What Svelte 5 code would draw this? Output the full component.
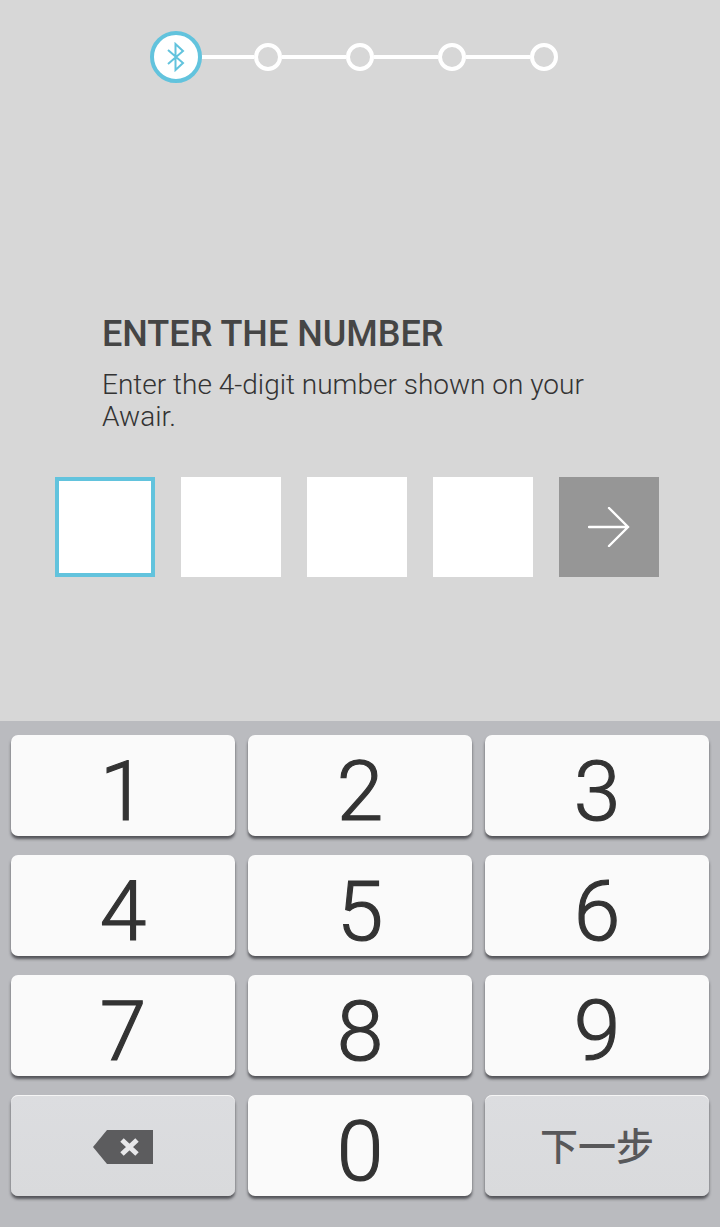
<script>
	const keys = ['1', '2', '3', '4', '5', '6', '7', '8', '9'];
	const dots = [0, 1, 2, 3];
</script>

<div class="screen">
	<main class="content">
		<div class="stepper">
			<div class="step-current">
				<svg width="22" height="30" viewBox="0 0 22 30" fill="none" stroke="#62c3dd" stroke-width="2">
					<path d="M3 8 L18 21 L10.500 28 V2 L18 9 L3 22" />
				</svg>
			</div>
			{#each dots as dot (dot)}
				<div class="line" class:first={dot === 0}></div>
				<div class="dot"></div>
			{/each}
		</div>

		<div class="copy">
			<h1>ENTER THE NUMBER</h1>
			<p>Enter the 4-digit number shown on your Awair.</p>
		</div>

		<div class="code-row">
			<div class="cell active"></div>
			<div class="cell"></div>
			<div class="cell"></div>
			<div class="cell"></div>
			<button class="next" aria-label="Next">
				<svg width="42" height="40" viewBox="0 0 42 40" fill="none" stroke="#fff" stroke-width="2.4" stroke-linecap="round">
					<path d="M1 20 H40 M21 1 L40 20 L21 39" />
				</svg>
			</button>
		</div>
	</main>

	<section class="keyboard">
		{#each keys as key}
			<button class="key">{key}</button>
		{/each}
		<button class="key fn" aria-label="Delete">
			<svg width="62" height="36" viewBox="0 0 62 36">
				<path d="M15 1 H61 V35 H15 L1 18 Z" fill="#5c5c5e" />
				<path d="M30 11 L45 25 M45 11 L30 25" stroke="#e8e8ea" stroke-width="5" />
			</svg>
		</button>
		<button class="key">0</button>
		<button class="key fn next-label">下一步</button>
	</section>
</div>

<style>
	:global(body) {
		margin: 0;
		background: #d7d7d7;
	}

	.screen {
		width: 720px;
		height: 1227px;
		display: flex;
		flex-direction: column;
		font-family: Roboto, 'Noto Sans CJK SC', sans-serif;
	}

	.content {
		height: 721px;
		background: #d7d7d7;
		box-sizing: border-box;
		padding-top: 31px;
	}

	.stepper {
		display: flex;
		align-items: center;
		margin-left: 150px;
	}

	.step-current {
		width: 52px;
		height: 52px;
		box-sizing: border-box;
		border: 4px solid #62c3dd;
		border-radius: 50%;
		background: #fff;
		display: flex;
		align-items: center;
		justify-content: center;
	}

	.line {
		width: 64px;
		height: 4px;
		background: #fff;
	}

	.line.first {
		width: 52px;
	}

	.dot {
		width: 28px;
		height: 28px;
		box-sizing: border-box;
		border: 4px solid #fff;
		border-radius: 50%;
	}

	.copy {
		margin: 229px 0 0 102px;
		width: 500px;
	}

	h1 {
		margin: 0;
		font-size: 36px;
		line-height: 44px;
		font-weight: 500;
		color: #454545;
	}

	p {
		margin: 13px 0 0;
		font-size: 28px;
		line-height: 32px;
		font-weight: 300;
		color: #333;
	}

	.code-row {
		display: flex;
		gap: 26px;
		margin: 44px 0 0 55px;
	}

	.cell,
	.next {
		width: 100px;
		height: 100px;
		box-sizing: border-box;
		background: #fff;
	}

	.cell.active {
		border: 4px solid #62c3dd;
	}

	.next {
		border: 0;
		padding: 0;
		background: #969696;
		display: flex;
		align-items: center;
		justify-content: center;
	}

	.keyboard {
		flex: 1;
		background: #babbbf;
		box-sizing: border-box;
		padding: 14px 11px 0;
		display: grid;
		grid-template-columns: repeat(3, 224px);
		grid-auto-rows: 101px;
		column-gap: 13px;
		row-gap: 19px;
	}

	.key {
		border: 0;
		padding: 13px 0 0;
		border-radius: 7px;
		background: #fafafa;
		box-shadow: 0 3px 3px rgba(50, 50, 55, 0.75);
		color: #333;
		font-family: inherit;
		font-size: 84px;
		font-weight: 300;
		-webkit-text-stroke: 1.2px #333;
		line-height: 1;
		display: flex;
		align-items: center;
		justify-content: center;
	}

	.fn {
		padding: 2px 0 0;
		background: linear-gradient(#dcdde0, #d9dadc);
		box-shadow: 0 3px 3px rgba(50, 50, 55, 0.75), inset 0 1px 0 #f5f5f5;
	}

	.next-label {
		padding: 3px 0 0;
		font-size: 38px;
		font-weight: 500;
		color: #58585a;
		-webkit-text-stroke: 0;
	}
</style>
